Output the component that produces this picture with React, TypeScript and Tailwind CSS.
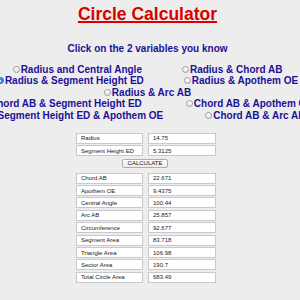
import React from 'react';

const Radio: React.FC<{ checked?: boolean }> = ({ checked }) =>
  checked ? (
    <span className="flex h-[7px] w-[7px] shrink-0 items-center justify-center rounded-full bg-[#3b8af0] border border-[#2a6fd0]">
      <span className="h-[2px] w-[2px] rounded-full bg-white" />
    </span>
  ) : (
    <span className="h-[7px] w-[7px] shrink-0 rounded-full border border-[#9c9c9c] bg-gradient-to-b from-[#ffffff] to-[#e6e6e6]" />
  );

const Opt: React.FC<{ label: string; checked?: boolean }> = ({ label, checked }) => (
  <span className="flex items-center gap-[1px]">
    <Radio checked={checked} />
    <span>{label}</span>
  </span>
);

const Box: React.FC<{ text: string }> = ({ text }) => (
  <div className="flex h-[11px] items-center border border-[#c9c9c9] bg-white pl-[4px] text-[6px] leading-none text-[#222]">
    {text}
  </div>
);

const inputs: [string, string][] = [
  ['Radius', '14.75'],
  ['Segment Height ED', '5.3125'],
];

const results: [string, string][] = [
  ['Chord AB', '22.671'],
  ['Apothem OE', '9.4375'],
  ['Central Angle', '100.44'],
  ['Arc AB', '25.857'],
  ['Circumference', '92.677'],
  ['Segment Area', '83.718'],
  ['Triangle Area', '106.98'],
  ['Sector Area', '190.7'],
  ['Total Circle Area', '683.49'],
];

export default function App() {
  return (
    <div className="h-[300px] w-[300px] overflow-hidden bg-[#ededed] pr-[5px] font-['Liberation_Sans',Arial,sans-serif]">
      <h1 className="pt-[6px] text-center text-[17.5px] font-bold leading-[17.5px] text-[#d80000] underline decoration-[1.5px] underline-offset-[1px]">
        Circle Calculator
      </h1>
      <p className="mt-[19px] text-center text-[10px] font-bold leading-[12px] text-[#1c1096]">
        Click on the 2 variables you know
      </p>

      {/* radio choices */}
      <div className="mt-[9px] text-[10px] font-bold leading-[11.5px] text-[#1c1096]">
        <div className="flex h-[11.5px] justify-center gap-[40px] whitespace-nowrap">
          <Opt label="Radius and Central Angle" />
          <Opt label="Radius & Chord AB" />
        </div>
        <div className="flex h-[11.5px] justify-center gap-[40px] whitespace-nowrap">
          <Opt label="Radius & Segment Height ED" checked />
          <Opt label="Radius & Apothem OE" />
        </div>
        <div className="flex h-[11.5px] justify-center whitespace-nowrap">
          <Opt label="Radius & Arc AB" />
        </div>
        <div className="flex h-[11.5px] justify-center gap-[44px] whitespace-nowrap">
          <Opt label="Chord AB & Segment Height ED" />
          <Opt label="Chord AB & Apothem OE" />
        </div>
        <div className="flex h-[11.5px] justify-center gap-[42px] whitespace-nowrap">
          <Opt label="Segment Height ED & Apothem OE" />
          <Opt label="Chord AB & Arc AB" />
        </div>
      </div>

      {/* form */}
      <div className="ml-[76px] mt-[11.7px] w-[140px]">
        <div className="grid grid-cols-[67px_68px] gap-x-[5px] gap-y-[1.5px]">
          {inputs.map(([k, v]) => (
            <React.Fragment key={k}>
              <Box text={k} />
              <Box text={v} />
            </React.Fragment>
          ))}
        </div>
        <div className="mt-[2.5px] flex justify-center pr-[2px]">
          <button className="flex h-[9px] w-[46px] items-center justify-center rounded-[2px] border border-[#adadad] bg-gradient-to-b from-[#ffffff] to-[#ececec] text-[6px] leading-none text-[#111]">
            CALCULATE
          </button>
        </div>
        <div className="mt-[5px] grid grid-cols-[67px_68px] gap-x-[5px] gap-y-[1.4px]">
          {results.map(([k, v]) => (
            <React.Fragment key={k}>
              <Box text={k} />
              <Box text={v} />
            </React.Fragment>
          ))}
        </div>
      </div>
    </div>
  );
}
